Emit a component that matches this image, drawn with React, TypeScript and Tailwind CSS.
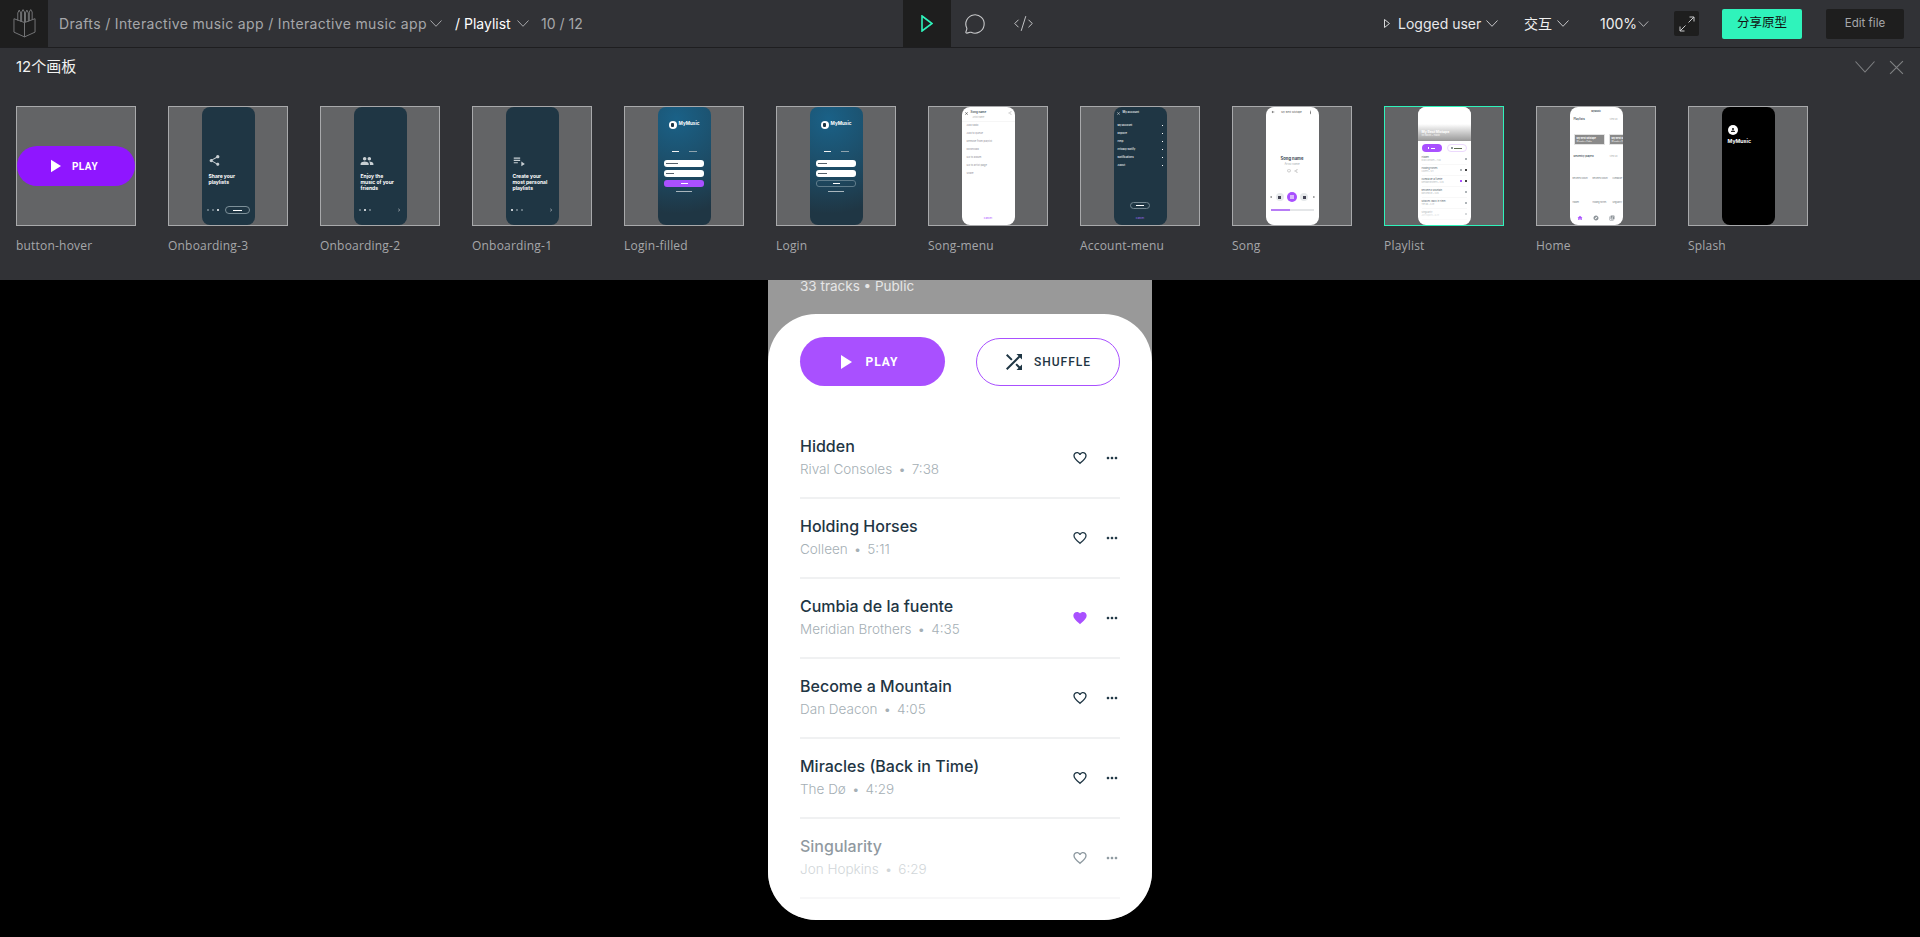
import React from 'react';
import { MessageCircle, CodeXml } from 'lucide-react';
import {
  MdShuffle, MdFavoriteBorder, MdFavorite, MdMoreHoriz, MdShare, MdPeople, MdPlaylistPlay,
  MdClose, MdChevronRight, MdHome, MdSkipNext, MdSkipPrevious, MdMoreVert, MdArrowBack,
  MdExplore, MdLibraryMusic, MdPerson,
} from 'react-icons/md';

const Chevron = ({ className = 'w-[12px] h-[7px]', color = '#c4c5c7' }: { className?: string; color?: string }) => (
  <svg viewBox="0 0 12 7" className={className} fill="none" stroke={color} strokeWidth="1">
    <path d="M0.5 0.5 L6 6.3 L11.5 0.5" />
  </svg>
);

const Logo = () => (
  <svg viewBox="0 0 24 30" className="w-[23px] h-[29px]" fill="none" stroke="#77787a" strokeWidth="1">
    <path d="M1 10 L12 14 L23 10 L23 24 L12 29 L1 24 Z" />
    <path d="M12 14 L12 29" />
    <path d="M5 12 V4 L6.5 1 L8 4 V13 M9 13 V3 L10.5 0.5 L12 3 V14 M13 13.5 V4 L14.5 1 L16 4 V13 M17 12.5 V3 L18.5 0.5 L20 3 V11" />
  </svg>
);

const PlayTri = ({ className, color = 'white' }: { className: string; color?: string }) => (
  <svg viewBox="0 0 11 14" className={className}>
    <polygon points="0,0 11,7 0,14" fill={color} />
  </svg>
);

const UI = "font-['Inter','Noto_Sans_CJK_SC',sans-serif]";

const Header = () => (
  <div className={`h-[48px] flex items-stretch bg-[#313236] border-b border-[#1e1e20] text-[14px] text-[#a6a7aa] ${UI}`}>
    <div className="w-[48px] h-[47px] bg-[#1e1e1e] flex items-center justify-center">
      <Logo />
    </div>
    <div className="flex items-center pl-[11px] w-[855px]">
      <span className="w-[367px] whitespace-nowrap tracking-[0.35px]">Drafts / Interactive music app / Interactive music app</span>
      <Chevron className="w-[12px] h-[7px] ml-[4px]" color="#a6a7aa" />
      <span className="ml-[13px] text-white whitespace-nowrap w-[60px]">/ Playlist</span>
      <Chevron className="w-[12px] h-[7px] ml-[2px]" color="#a6a7aa" />
      <span className="ml-[12px] whitespace-nowrap">10 / 12</span>
    </div>
    <div className="w-[48px] h-[47px] bg-[#1e1e1e] flex items-center justify-center">
      <svg viewBox="0 0 12 17" className="w-[12px] h-[17px]" fill="none" stroke="#2ff3bb" strokeWidth="1.6">
        <polygon points="1,1 11,8.5 1,16" />
      </svg>
    </div>
    <div className="w-[48px] flex items-center justify-center">
      <MessageCircle size={22} strokeWidth={1.2} color="#c8c9cb" />
    </div>
    <div className="w-[48px] flex items-center justify-center">
      <CodeXml size={21} strokeWidth={1.1} color="#c8c9cb" />
    </div>
    <div className="flex-1 flex items-center text-white">
      <svg viewBox="0 0 6 9" className="w-[6px] h-[9px] ml-[337px]" fill="none" stroke="#d8d9db" strokeWidth="1">
        <polygon points="0.5,0.5 5.5,4.5 0.5,8.5" />
      </svg>
      <span className="ml-[8px] w-[88px] whitespace-nowrap text-[#e8e8ea]">Logged user</span>
      <Chevron />
      <span className="ml-[26px] w-[33px] whitespace-nowrap text-[#f0f0f0]">交互</span>
      <Chevron />
      <span className="ml-[31px] w-[38px] whitespace-nowrap text-[#f0f0f0]">100%</span>
      <Chevron className="w-[11px] h-[6px]" />
      <div className="ml-[25px] w-[25px] h-[25px] rounded-[2px] bg-[#1e1e1e] flex items-center justify-center">
        <svg viewBox="0 0 16 16" className="w-[16px] h-[16px]" fill="none" stroke="#c8c9cb" strokeWidth="1">
          <path d="M9.5 6.5 L15 1 M10.5 1 H15 V5.5 M6.5 9.5 L1 15 M1 10.5 V15 H5.5" />
        </svg>
      </div>
      <div className="ml-[23px] w-[80px] h-[30px] rounded-[2px] bg-[#2ff3bb] flex items-center justify-center text-[12.5px] text-[#111]">分享原型</div>
      <div className="ml-[24px] w-[78px] h-[30px] rounded-[2px] bg-[#1e1e1e] flex items-center justify-center text-[11.5px] text-[#a6a7aa]">Edit file</div>
    </div>
  </div>
);

/* ---------- thumbnails ---------- */
const Phone = ({ className = '', children }: { className?: string; children?: React.ReactNode }) => (
  <div className={`w-[53px] h-[118px] rounded-[8px] overflow-hidden flex flex-col shrink-0 font-['Inter',sans-serif] ${className}`}>{children}</div>
);

const Onboarding = ({ icon, lines, active, last }: { icon: React.ReactNode; lines: string[]; active: number; last?: boolean }) => (
  <Phone className="bg-[#1f3644]">
    <div className="pt-[47px] pl-[6px] h-[66px] text-[#c8cfd3]">{icon}</div>
    <div className="pl-[7px] text-[5px] leading-[6px] font-bold text-white whitespace-nowrap">
      {lines.map((l) => <div key={l}>{l}</div>)}
    </div>
    <div className="mt-auto mb-[11px] h-[8px] px-[5px] flex items-center justify-between">
      <div className="flex gap-[3px]">
        {[0, 1, 2].map((i) => (
          <div key={i} className={`w-[2px] h-[2px] rounded-full ${i === active ? 'bg-white' : 'bg-[#7d8d96]'}`} />
        ))}
      </div>
      {last ? (
        <div className="w-[25px] h-[8px] rounded-[4px] border border-[#7d9099] flex items-center justify-center">
          <div className="w-[9px] h-[1px] bg-white" />
        </div>
      ) : (
        <MdChevronRight size={6} color="#d0d5d8" />
      )}
    </div>
  </Phone>
);

const LoginThumb = ({ filled }: { filled?: boolean }) => (
  <Phone className="bg-[radial-gradient(circle_at_35%_10%,#1a6187_0%,#1d4a63_50%,#1f3644_85%)] items-center">
    <div className="mt-[13px] h-[9px] flex items-center gap-[2px]">
      <div className="w-[8px] h-[8px] rounded-full bg-white flex items-center justify-center">
        <div className="w-[3px] h-[4px] bg-[#1f3644] rounded-[1px]" />
      </div>
      <span className="text-[4.6px] font-bold text-white whitespace-nowrap">MyMusic</span>
    </div>
    <div className="mt-[22px] w-full px-[14px] flex justify-between">
      <div className="w-[7px] h-[1px] bg-[#f2f2f2]" />
      <div className="w-[8px] h-[1px] bg-[#8fa3ae]" />
    </div>
    <div className="mt-[8px] w-[40px] h-[7px] rounded-[3px] bg-white flex items-center pl-[2px]">
      <div className={`h-[1px] bg-[#55606a] ${filled ? 'w-[12px]' : 'w-[9px]'}`} />
    </div>
    <div className="mt-[3px] w-[40px] h-[7px] rounded-[3px] bg-white flex items-center pl-[2px]">
      <div className={`h-[1px] bg-[#55606a] ${filled ? 'w-[8px]' : 'w-[9px]'}`} />
    </div>
    <div className={`mt-[3px] w-[40px] h-[7px] rounded-[3px] flex items-center justify-center ${filled ? 'bg-[#a950ff]' : 'border border-[#5f7c8b]'}`}>
      <div className="w-[7px] h-[1px] bg-white" />
    </div>
    <div className="mt-[4px] w-[16px] h-[1px] bg-[#a9b6bd]" />
  </Phone>
);

const SongMenuThumb = () => (
  <Phone className="bg-white text-[#8d8d96] text-[2.6px] leading-[3px]">
    <div className="h-[15px] shrink-0 flex items-start pt-[4px] pl-[2px] pr-[2px] border-b border-[#f6f6f6]">
      <MdClose size={5} color="#444" />
      <div className="ml-[2px]">
        <div className="text-[#3b4a55] text-[2.9px] font-semibold whitespace-nowrap">Song name</div>
        <div className="mt-[2px] text-[#aaa] text-[2.2px] whitespace-nowrap pl-[2px]">Artist name</div>
      </div>
      <MdShare size={4} color="#999" className="ml-auto mr-[1px]" />
    </div>
    <div className="pl-[5px] pt-[2px] flex flex-col gap-[5px] whitespace-nowrap">
      {['Add radio', 'Add to queue', 'Remove from playlist', 'Download', 'Go to album', 'Go to artist page', 'Share'].map((t) => (
        <div key={t}>{t}</div>
      ))}
    </div>
    <div className="mt-auto mb-[5px] text-center text-[#a950ff] whitespace-nowrap">Cancel</div>
  </Phone>
);

const AccountMenuThumb = () => (
  <Phone className="bg-[#1f3644] text-[#e8eaeb] text-[2.6px] leading-[3px] font-semibold">
    <div className="h-[15px] shrink-0 flex items-start pt-[4px] pl-[2px]">
      <MdClose size={5} color="#c5ccd0" />
      <div className="ml-[2px] text-[2.9px] whitespace-nowrap">My account</div>
    </div>
    <div className="px-[4px] pt-[2px] flex flex-col gap-[5px] whitespace-nowrap">
      {['My account', 'Explore', 'Help', 'Privacy Notify', 'Notifications', 'About'].map((t) => (
        <div key={t} className="flex justify-between items-center"><span>{t}</span><span className="w-[1px] h-[1px] bg-white" /></div>
      ))}
    </div>
    <div className="mt-auto mx-auto w-[20px] h-[7px] rounded-[4px] border border-[#72858f] flex items-center justify-center">
      <div className="w-[8px] h-[1px] bg-white" />
    </div>
    <div className="mt-[8px] mb-[5px] text-center text-[#a06cf0] font-normal whitespace-nowrap">Cancel</div>
  </Phone>
);

const SongThumb = () => (
  <Phone className="bg-white items-center">
    <div className="w-full h-[15px] flex items-start justify-center gap-[6px] pt-[3px] shrink-0">
      <MdArrowBack size={4} color="#333" />
      <span className="text-[2.6px] leading-[4px] text-[#555] whitespace-nowrap">My Best Mixtape</span>
      <MdMoreVert size={5} color="#333" />
    </div>
    <div className="mt-[34px] text-[4.2px] leading-[5px] font-bold text-[#3b4a55] whitespace-nowrap">Song name</div>
    <div className="mt-[1px] text-[2.8px] leading-[4px] text-[#a5adb2] whitespace-nowrap">Artist name</div>
    <div className="mt-[3px] flex gap-[3px]">
      <MdFavoriteBorder size={4} color="#888" />
      <MdShare size={4} color="#888" />
    </div>
    <div className="mt-[19px] w-full px-[3px] flex items-center justify-between">
      <MdSkipPrevious size={4} color="#777" />
      <div className="w-[8px] h-[8px] rounded-full bg-[#e6e9eb] flex items-center justify-center"><div className="w-[3px] h-[3px] bg-[#445]" /></div>
      <div className="w-[10px] h-[10px] rounded-full bg-[#a950ff] flex items-center justify-center"><div className="w-[4px] h-[4px] bg-[#d9b8fa]" /></div>
      <div className="w-[8px] h-[8px] rounded-full bg-[#e6e9eb] flex items-center justify-center"><div className="w-[3px] h-[3px] bg-[#445]" /></div>
      <MdSkipNext size={4} color="#777" />
    </div>
    <div className="mt-[7px] w-[43px] h-[2px] bg-[#e4e6e8]"><div className="w-[19px] h-[2px] bg-[#b77cf5]" /></div>
  </Phone>
);

const PlaylistThumb = () => (
  <Phone className="bg-white">
    <div className="h-[34px] shrink-0 bg-gradient-to-b from-white via-white to-[#999] pt-[23px] pl-[4px] text-white whitespace-nowrap">
      <div className="text-[3.4px] leading-[4px] font-bold">My Best Mixtape</div>
      <div className="text-[2.2px] leading-[3px]">33 tracks • Public</div>
    </div>
    <div className="pt-[3px] bg-white rounded-t-[6px] flex justify-between px-[4px]">
      <div className="w-[20px] h-[8px] rounded-full bg-[#a950ff] flex items-center justify-center gap-[1px]">
        <div className="w-[1px] h-[2px] bg-white" /><div className="w-[4px] h-[1px] bg-white ml-[1px]" />
      </div>
      <div className="w-[20px] h-[8px] rounded-full border border-[#ecd9fd] flex items-center justify-center gap-[1px]">
        <div className="w-[2px] h-[2px] bg-[#8f989d]" /><div className="w-[8px] h-[1px] bg-[#5b6a50]" />
      </div>
    </div>
    <div className="mt-[2px] px-[4px] flex flex-col">
      {[
        ['Hidden', 'Rival Consoles • 7:38'],
        ['Holding Horses', 'Colleen • 5:11'],
        ['Cumbia de la fuente', 'Meridian Brothers • 4:35'],
        ['Become a Mountain', 'Dan Deacon • 4:05'],
        ['Miracles (Back in Time)', 'The Dø • 4:29'],
        ['Singularity', 'Jon Hopkins • 6:29'],
      ].map(([t, s], i) => (
        <div key={t} className={`h-[11px] border-b border-[#f8f8f8] flex items-center justify-between ${i === 5 ? 'opacity-50' : ''}`}>
          <div className="whitespace-nowrap">
            <div className="text-[2.2px] leading-[3px] text-[#4b5b66]">{t}</div>
            <div className="text-[1.9px] leading-[3px] text-[#b0b6ba]">{s}</div>
          </div>
          <div className="flex items-center gap-[3px]">
            <div className={`w-[2px] h-[2px] ${i === 2 ? 'bg-[#a950ff]' : 'bg-[#aeb4b8]'}`} />
            {(i === 1 || i === 2) && <div className="w-[2px] h-[2px] bg-[#444]" />}
          </div>
        </div>
      ))}
    </div>
  </Phone>
);

const HomeThumb = () => (
  <Phone className="bg-white text-[#6d747a] text-[2.2px] leading-[3px]">
    <div className="h-[11px] shrink-0 flex justify-center pt-[3px] text-[#3b4a55] font-semibold whitespace-nowrap">MyMusic</div>
    <div className="flex justify-between px-[4px] whitespace-nowrap"><span className="font-semibold text-[2.8px] text-[#3b4a55]">Playlists</span><span className="text-[#aaa] pr-[1px]">View all</span></div>
    <div className="mt-[13px] flex gap-[4px] pl-[4px] whitespace-nowrap overflow-hidden">
      <div className="w-[31px] h-[11px] shrink-0 bg-[#8a8a8a] border border-[#e3e3e3] text-white pl-[2px] pt-[2px]"><div className="font-bold text-[2.4px]">My Best Mixtape</div><div className="text-[1.8px] leading-[2px]">33 tracks • Public</div></div>
      <div className="w-[31px] h-[11px] shrink-0 bg-[#8a8a8a] border border-[#e3e3e3] text-white pl-[2px] pt-[2px]"><div className="font-bold text-[2.4px]">My Best Mixtape</div><div className="text-[1.8px] leading-[2px]">33 tracks • Public</div></div>
    </div>
    <div className="mt-[10px] flex justify-between px-[4px] whitespace-nowrap"><span className="font-semibold text-[2.6px] text-[#3b4a55]">Recently played</span><span className="text-[#aaa] pr-[1px]">View all</span></div>
    <div className="mt-[19px] flex gap-[5px] pl-[3px] whitespace-nowrap overflow-hidden text-[1.9px]"><span className="w-[15px] shrink-0">Become a Mount</span><span className="w-[15px] shrink-0">Become a Mount</span><span className="w-[15px] shrink-0">Cumbia de</span></div>
    <div className="mt-[21px] flex gap-[5px] pl-[3px] whitespace-nowrap overflow-hidden text-[1.9px]"><span className="w-[15px] shrink-0">Hidden</span><span className="w-[15px] shrink-0">Holding Horses</span><span className="w-[15px] shrink-0">Singularity</span></div>
    <div className="mt-auto mb-[4px] flex justify-around px-[3px]">
      <MdHome size={6} color="#a950ff" />
      <MdExplore size={6} color="#8b9297" />
      <MdLibraryMusic size={6} color="#8b9297" />
    </div>
  </Phone>
);

const SplashThumb = () => (
  <Phone className="bg-black pl-[6px]">
    <div className="mt-[18px] w-[10px] h-[10px] rounded-full bg-white flex items-center justify-center">
      <MdPerson size={6} color="#222" />
    </div>
    <div className="mt-[3px] text-[5.2px] leading-[7px] font-bold text-white whitespace-nowrap">MyMusic</div>
  </Phone>
);

const HoverThumb = () => (
  <div className="w-[118px] h-[40px] rounded-full bg-[#8f16ff] flex items-center justify-center gap-[11px] pr-[3px]">
    <PlayTri className="w-[10px] h-[14px]" />
    <span className="font-['Roboto',sans-serif] text-[10px] font-bold tracking-[0.5px] text-white">PLAY</span>
  </div>
);

const thumbs: { label: string; node: React.ReactNode; selected?: boolean }[] = [
  { label: 'button-hover', node: <HoverThumb /> },
  { label: 'Onboarding-3', node: <Onboarding icon={<MdShare size={13} />} lines={['Share your', 'playlists']} active={2} last /> },
  { label: 'Onboarding-2', node: <Onboarding icon={<MdPeople size={14} />} lines={['Enjoy the', 'music of your', 'friends']} active={1} /> },
  { label: 'Onboarding-1', node: <Onboarding icon={<MdPlaylistPlay size={14} />} lines={['Create your', 'most personal', 'playlists']} active={0} /> },
  { label: 'Login-filled', node: <LoginThumb filled /> },
  { label: 'Login', node: <LoginThumb /> },
  { label: 'Song-menu', node: <SongMenuThumb /> },
  { label: 'Account-menu', node: <AccountMenuThumb /> },
  { label: 'Song', node: <SongThumb /> },
  { label: 'Playlist', node: <PlaylistThumb />, selected: true },
  { label: 'Home', node: <HomeThumb /> },
  { label: 'Splash', node: <SplashThumb /> },
];

const Panel = () => (
  <div className={`h-[232px] bg-[#313236] ${UI}`}>
    <div className="h-[38px] mb-[20px] flex items-center justify-between pl-[16px] pr-[16px]">
      <span className="text-[15px] text-[#f2f2f2]">12个画板</span>
      <div className="flex items-center gap-[14px]">
        <svg viewBox="0 0 20 12" className="w-[20px] h-[12px]" fill="none" stroke="#7f8083" strokeWidth="1.1"><path d="M0.5 0.5 L10 11 L19.5 0.5" /></svg>
        <svg viewBox="0 0 14 14" className="w-[15px] h-[15px]" fill="none" stroke="#7f8083" strokeWidth="1.1"><path d="M1 1 L13 13 M13 1 L1 13" /></svg>
      </div>
    </div>
    <div className="flex gap-[32px] pl-[16px]">
      {thumbs.map((t) => (
        <div key={t.label} className="w-[120px] shrink-0">
          <div className={`w-[120px] h-[120px] border bg-[#636466] flex items-center justify-center overflow-hidden ${t.selected ? 'border-[#2ff3bb]' : 'border-[#a8a9ab]'}`}>
            {t.node}
          </div>
          <div className="mt-[12px] text-[12px] leading-[16px] tracking-[0.2px] text-[#a6a7aa] whitespace-nowrap font-['Open_Sans',sans-serif]">{t.label}</div>
        </div>
      ))}
    </div>
  </div>
);

/* ---------- main phone ---------- */
const tracks = [
  { t: 'Hidden', a: 'Rival Consoles', d: '7:38' },
  { t: 'Holding Horses', a: 'Colleen', d: '5:11' },
  { t: 'Cumbia de la fuente', a: 'Meridian Brothers', d: '4:35', liked: true },
  { t: 'Become a Mountain', a: 'Dan Deacon', d: '4:05' },
  { t: 'Miracles (Back in Time)', a: 'The Dø', d: '4:29' },
  { t: 'Singularity', a: 'Jon Hopkins', d: '6:29', dim: true },
];

const MainPhone = () => (
  <div className="w-[384px] mx-auto bg-[#999999] rounded-b-[48px] font-['Inter',sans-serif]">
    <div className="h-[34px] pl-[32px] text-[13.5px] leading-[12px] text-[#e6e6e6] whitespace-nowrap">33 tracks • Public</div>
    <div className="h-[606px] bg-white rounded-[48px] px-[32px] pt-[23px]">
      <div className="flex items-center justify-between font-['Roboto',sans-serif]">
        <div className="w-[145px] h-[49px] rounded-full bg-[#a950ff] flex items-center justify-center gap-[13px] pr-[5px] pt-[1px]">
          <PlayTri className="w-[11px] h-[14px]" />
          <span className="text-[12px] font-bold tracking-[1px] text-white">PLAY</span>
        </div>
        <div className="w-[144px] h-[48px] rounded-full border border-[#a950ff] flex items-center justify-center gap-[8px] pt-[1px] pr-[3px]">
          <MdShuffle size={24} color="#1f3644" />
          <span className="text-[12px] font-medium tracking-[1px] text-[#1f3644]">SHUFFLE</span>
        </div>
      </div>
      <div className="mt-[33px]">
        {tracks.map((r) => (
          <div key={r.t} className={`h-[80px] border-b-2 border-[#f0f1f2] flex items-center ${r.dim ? 'opacity-50' : ''}`}>
            <div className="flex-1 min-w-0 pb-[2px]">
              <div className="text-[16px] leading-[22px] font-medium text-[#1f3644] whitespace-nowrap">{r.t}</div>
              <div className="mt-[2px] text-[13.5px] leading-[20px] font-light text-[#a5afb5] whitespace-nowrap">
                {r.a}<span className="mx-[6px]">•</span>{r.d}
              </div>
            </div>
            <div className="w-[20px] flex justify-center mr-[14px]">
              {r.liked ? <MdFavorite size={16} color="#a950ff" /> : <MdFavoriteBorder size={16} color="#1f3644" />}
            </div>
            <div className="w-[16px] flex justify-center">
              <MdMoreHoriz size={16} color="#1f3644" />
            </div>
          </div>
        ))}
      </div>
    </div>
  </div>
);

export default function App() {
  return (
    <div className="w-[1920px] h-[937px] bg-black overflow-hidden">
      <Header />
      <Panel />
      <MainPhone />
    </div>
  );
}
